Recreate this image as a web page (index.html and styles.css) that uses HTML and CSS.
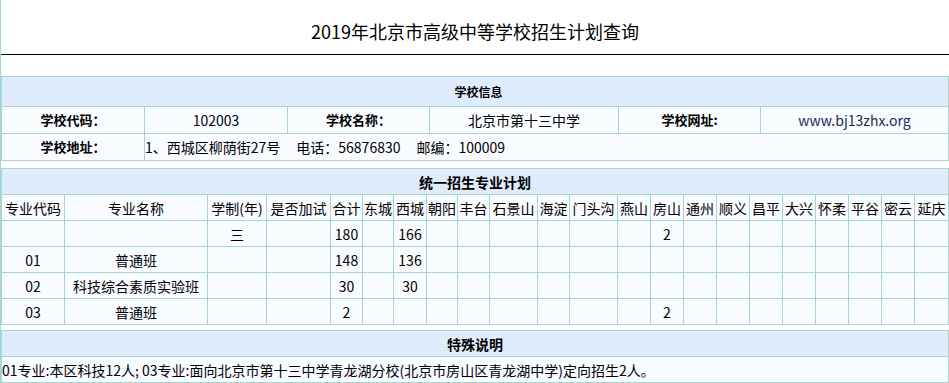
FILE: index.html
```html
<!DOCTYPE html>
<html lang="zh-CN">
<head>
<meta charset="utf-8">
<title>2019年北京市高级中等学校招生计划查询</title>
<link rel="stylesheet" href="styles.css">
</head>
<body>
<div class="page">
  <h1 class="title">2019年北京市高级中等学校招生计划查询</h1>

  <div class="grid info">
    <div class="cell head small all">学校信息</div>
    <div class="cell label">学校代码：</div>
    <div class="cell">102003</div>
    <div class="cell label">学校名称：</div>
    <div class="cell">北京市第十三中学</div>
    <div class="cell label">学校网址:</div>
    <div class="cell link">www.bj13zhx.org</div>
    <div class="cell label">学校地址：</div>
    <div class="cell left span5">1、西城区柳荫街27号<span class="sep">电话：56876830</span><span class="sep">邮编：100009</span></div>
  </div>

  <div class="grid plan">
    <div class="cell head all">统一招生专业计划</div>
    <div class="cell">专业代码</div>
    <div class="cell">专业名称</div>
    <div class="cell">学制(年)</div>
    <div class="cell">是否加试</div>
    <div class="cell">合计</div>
    <div class="cell">东城</div>
    <div class="cell">西城</div>
    <div class="cell">朝阳</div>
    <div class="cell">丰台</div>
    <div class="cell">石景山</div>
    <div class="cell">海淀</div>
    <div class="cell">门头沟</div>
    <div class="cell">燕山</div>
    <div class="cell">房山</div>
    <div class="cell">通州</div>
    <div class="cell">顺义</div>
    <div class="cell">昌平</div>
    <div class="cell">大兴</div>
    <div class="cell">怀柔</div>
    <div class="cell">平谷</div>
    <div class="cell">密云</div>
    <div class="cell">延庆</div>

    <div class="cell"></div><div class="cell"></div><div class="cell">三</div><div class="cell"></div>
    <div class="cell">180</div><div class="cell"></div><div class="cell">166</div><div class="cell"></div>
    <div class="cell"></div><div class="cell"></div><div class="cell"></div><div class="cell"></div>
    <div class="cell"></div><div class="cell">2</div><div class="cell"></div><div class="cell"></div>
    <div class="cell"></div><div class="cell"></div><div class="cell"></div><div class="cell"></div>
    <div class="cell"></div><div class="cell"></div>

    <div class="cell">01</div><div class="cell">普通班</div><div class="cell"></div><div class="cell"></div>
    <div class="cell">148</div><div class="cell"></div><div class="cell">136</div><div class="cell"></div>
    <div class="cell"></div><div class="cell"></div><div class="cell"></div><div class="cell"></div>
    <div class="cell"></div><div class="cell"></div><div class="cell"></div><div class="cell"></div>
    <div class="cell"></div><div class="cell"></div><div class="cell"></div><div class="cell"></div>
    <div class="cell"></div><div class="cell"></div>

    <div class="cell">02</div><div class="cell">科技综合素质实验班</div><div class="cell"></div><div class="cell"></div>
    <div class="cell">30</div><div class="cell"></div><div class="cell">30</div><div class="cell"></div>
    <div class="cell"></div><div class="cell"></div><div class="cell"></div><div class="cell"></div>
    <div class="cell"></div><div class="cell"></div><div class="cell"></div><div class="cell"></div>
    <div class="cell"></div><div class="cell"></div><div class="cell"></div><div class="cell"></div>
    <div class="cell"></div><div class="cell"></div>

    <div class="cell">03</div><div class="cell">普通班</div><div class="cell"></div><div class="cell"></div>
    <div class="cell">2</div><div class="cell"></div><div class="cell"></div><div class="cell"></div>
    <div class="cell"></div><div class="cell"></div><div class="cell"></div><div class="cell"></div>
    <div class="cell"></div><div class="cell">2</div><div class="cell"></div><div class="cell"></div>
    <div class="cell"></div><div class="cell"></div><div class="cell"></div><div class="cell"></div>
    <div class="cell"></div><div class="cell"></div>
  </div>

  <div class="grid note">
    <div class="cell head">特殊说明</div>
    <div class="cell left">01专业:本区科技12人; 03专业:面向北京市第十三中学青龙湖分校(北京市房山区青龙湖中学)定向招生2人。</div>
  </div>
</div>
</body>
</html>
```

FILE: styles.css
```css
html, body {
  margin: 0;
  padding: 0;
  background: #ffffff;
}

body {
  font-family: "Noto Sans CJK SC", "Noto Sans", sans-serif;
  color: #000;
  font-size: 14px;
}

.page {
  min-height: 100vh;
  border-left: 1px solid #a8d5cd;
  overflow: hidden;
}

.title {
  margin: 0 0 21px 0;
  padding: 18px 0 10px;
  height: 26px;
  line-height: 26px;
  font-size: 18px;
  font-weight: normal;
  text-align: center;
  border-bottom: 1px solid #000;
}

.grid {
  display: grid;
  width: 948px;
  box-sizing: border-box;
  padding: 1px;
  gap: 1px;
  background: #a8d5cd;
}

.info {
  grid-template-columns: 142px 142px 141px 188px 141px 187px;
  grid-template-rows: 29px 26px 26px;
  margin-bottom: 7px;
}

.plan {
  grid-template-columns: 62px 142px 58px 63px 31px 30px 32px 30px 31px 47px 31px 47px 32px 32px 32px 32px 32px 32px 32px 32px 32px 33px;
  grid-auto-rows: 25px;
  margin-bottom: 5px;
}

.note {
  grid-template-columns: 1fr;
  grid-auto-rows: 25px;
}

.cell {
  background: #f8fbff;
  display: flex;
  align-items: center;
  justify-content: center;
  white-space: nowrap;
  overflow: hidden;
  line-height: 18px;
}

.cell.head {
  background: #dfecfb;
  font-weight: bold;
  font-size: 14px;
}

.cell.head.small {
  font-size: 12px;
  padding-left: 7px;
}

.cell.all {
  grid-column: 1 / -1;
}

.cell.span5 {
  grid-column: span 5;
}

.cell.label {
  font-weight: bold;
  font-size: 13px;
}

.cell.left {
  justify-content: flex-start;
}

.cell.link {
  color: #1c2b52;
}

.sep {
  margin-left: 16px;
}
```
